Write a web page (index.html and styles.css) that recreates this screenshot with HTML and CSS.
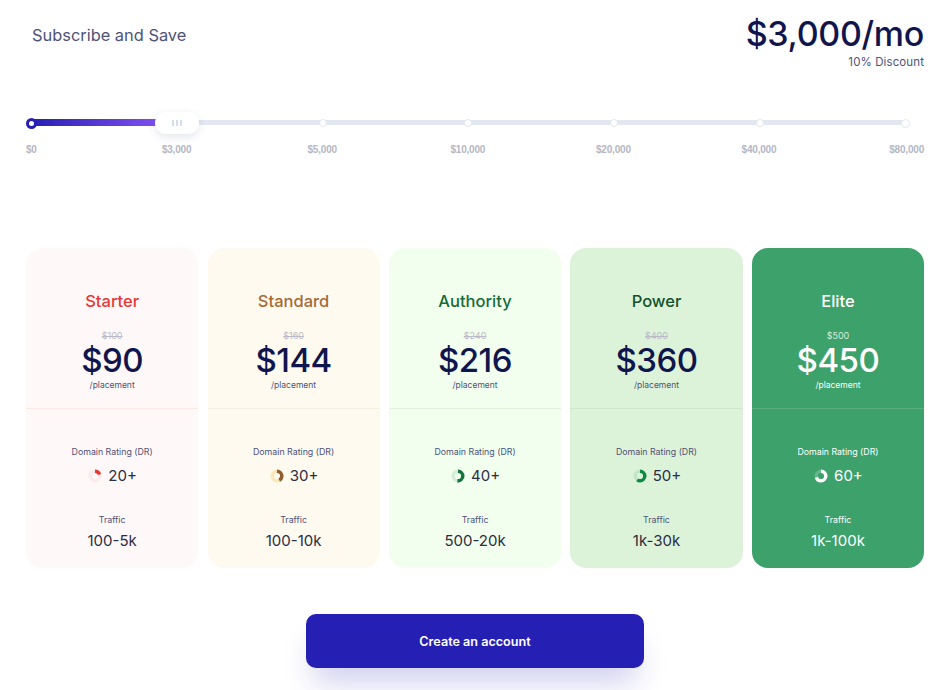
FILE: index.html
```html
<!DOCTYPE html>
<html lang="en">
<head>
    <meta charset="UTF-8">
    <meta name="viewport" content="width=device-width, initial-scale=1.0">
    <title>Subscribe and Save</title>
    <link rel="stylesheet" href="styles.css">
</head>
<body>
    <main class="pricing">
        <header class="summary">
            <h1 class="summary-title">Subscribe and Save</h1>
            <div class="summary-price">
                <p class="summary-amount">$3,000/mo</p>
                <p class="summary-discount">10% Discount</p>
            </div>
        </header>

        <section class="slider">
            <div class="track">
                <div class="track-fill"></div>
                <span class="stop"><span class="dot dot-start"></span></span>
                <span class="stop">
                    <span class="handle"><i></i><i></i><i></i></span>
                </span>
                <span class="stop"><span class="dot"></span></span>
                <span class="stop"><span class="dot"></span></span>
                <span class="stop"><span class="dot"></span></span>
                <span class="stop"><span class="dot"></span></span>
                <span class="stop"><span class="dot dot-end"></span></span>
            </div>
            <div class="track-labels">
                <span>$0</span>
                <span>$3,000</span>
                <span>$5,000</span>
                <span>$10,000</span>
                <span>$20,000</span>
                <span>$40,000</span>
                <span>$80,000</span>
            </div>
        </section>

        <section class="plans">
            <article class="plan plan-starter">
                <div class="plan-top">
                    <h2 class="plan-name">Starter</h2>
                    <p class="plan-old">$100</p>
                    <p class="plan-price">$90</p>
                    <p class="plan-unit">/placement</p>
                </div>
                <div class="plan-bottom">
                    <p class="stat-label">Domain Rating (DR)</p>
                    <p class="stat-value">
                        <svg class="ring" viewBox="0 0 16 16"><circle class="ring-bg" cx="8" cy="8" r="4.8"/><circle class="ring-arc" cx="8" cy="8" r="4.8" pathLength="100" stroke-dasharray="20 100"/></svg>
                        20+
                    </p>
                    <p class="stat-label stat-traffic">Traffic</p>
                    <p class="stat-value stat-range">100-5k</p>
                </div>
            </article>

            <article class="plan plan-standard">
                <div class="plan-top">
                    <h2 class="plan-name">Standard</h2>
                    <p class="plan-old">$160</p>
                    <p class="plan-price">$144</p>
                    <p class="plan-unit">/placement</p>
                </div>
                <div class="plan-bottom">
                    <p class="stat-label">Domain Rating (DR)</p>
                    <p class="stat-value">
                        <svg class="ring" viewBox="0 0 16 16"><circle class="ring-bg" cx="8" cy="8" r="4.8"/><circle class="ring-arc" cx="8" cy="8" r="4.8" pathLength="100" stroke-dasharray="42 100"/></svg>
                        30+
                    </p>
                    <p class="stat-label stat-traffic">Traffic</p>
                    <p class="stat-value stat-range">100-10k</p>
                </div>
            </article>

            <article class="plan plan-authority">
                <div class="plan-top">
                    <h2 class="plan-name">Authority</h2>
                    <p class="plan-old">$240</p>
                    <p class="plan-price">$216</p>
                    <p class="plan-unit">/placement</p>
                </div>
                <div class="plan-bottom">
                    <p class="stat-label">Domain Rating (DR)</p>
                    <p class="stat-value">
                        <svg class="ring" viewBox="0 0 16 16"><circle class="ring-bg" cx="8" cy="8" r="4.8"/><circle class="ring-arc" cx="8" cy="8" r="4.8" pathLength="100" stroke-dasharray="52 100"/></svg>
                        40+
                    </p>
                    <p class="stat-label stat-traffic">Traffic</p>
                    <p class="stat-value stat-range">500-20k</p>
                </div>
            </article>

            <article class="plan plan-power">
                <div class="plan-top">
                    <h2 class="plan-name">Power</h2>
                    <p class="plan-old">$400</p>
                    <p class="plan-price">$360</p>
                    <p class="plan-unit">/placement</p>
                </div>
                <div class="plan-bottom">
                    <p class="stat-label">Domain Rating (DR)</p>
                    <p class="stat-value">
                        <svg class="ring" viewBox="0 0 16 16"><circle class="ring-bg" cx="8" cy="8" r="4.8"/><circle class="ring-arc" cx="8" cy="8" r="4.8" pathLength="100" stroke-dasharray="60 100"/></svg>
                        50+
                    </p>
                    <p class="stat-label stat-traffic">Traffic</p>
                    <p class="stat-value stat-range">1k-30k</p>
                </div>
            </article>

            <article class="plan plan-elite">
                <div class="plan-top">
                    <h2 class="plan-name">Elite</h2>
                    <p class="plan-old">$500</p>
                    <p class="plan-price">$450</p>
                    <p class="plan-unit">/placement</p>
                </div>
                <div class="plan-bottom">
                    <p class="stat-label">Domain Rating (DR)</p>
                    <p class="stat-value">
                        <svg class="ring" viewBox="0 0 16 16"><circle class="ring-bg" cx="8" cy="8" r="4.8"/><circle class="ring-arc" cx="8" cy="8" r="4.8" pathLength="100" stroke-dasharray="70 100"/></svg>
                        60+
                    </p>
                    <p class="stat-label stat-traffic">Traffic</p>
                    <p class="stat-value stat-range">1k-100k</p>
                </div>
            </article>
        </section>

        <div class="actions">
            <button class="create-btn">Create an account</button>
        </div>
    </main>
</body>
</html>
```

FILE: styles.css
```css
:root {
    --ink: #10164d;
    --muted: #4e5278;
    --track: #e3e7f0;
    --brand: #261fb3;
}

* {
    margin: 0;
    padding: 0;
    box-sizing: border-box;
}

html, body {
    height: 100%;
    overflow: hidden;
}

body {
    font-family: Inter, 'Noto Sans', sans-serif;
    color: var(--ink);
    background-color: #fff;
}

.pricing {
    padding: 0 22px 0 26px;
}

/* top row */
.summary {
    display: flex;
    justify-content: space-between;
    align-items: flex-start;
    height: 112px;
    padding-top: 14px;
}

.summary-title {
    margin: 11px 0 0 6px;
    font-size: 16.4px;
    line-height: 20px;
    font-weight: 400;
    color: var(--muted);
}

.summary-price {
    text-align: right;
}

.summary-amount {
    font-size: 34px;
    line-height: 40px;
    font-weight: 500;
    letter-spacing: -0.3px;
}

.summary-discount {
    font-size: 11.5px;
    line-height: 16px;
    letter-spacing: 0.1px;
    color: var(--muted);
}

/* slider */
.slider {
    height: 136px;
}

.track {
    position: relative;
    display: flex;
    justify-content: space-between;
    align-items: center;
    width: 885px;
    height: 22px;
}

.track::before {
    content: "";
    position: absolute;
    left: 5px;
    right: 5px;
    top: 8px;
    height: 5px;
    background-color: var(--track);
}

.track-fill {
    position: absolute;
    left: 5px;
    top: 7px;
    width: 130px;
    height: 7px;
    background: linear-gradient(90deg, var(--brand), #8250f2);
}

.stop {
    position: relative;
    display: flex;
    justify-content: center;
    align-items: center;
    width: 11px;
    height: 22px;
}

.dot {
    flex: none;
    width: 8px;
    height: 8px;
    border-radius: 50%;
    background-color: #fff;
    border: 1.5px solid var(--track);
}

.dot-start {
    width: 11px;
    height: 11px;
    border: 3px solid var(--brand);
}

.dot-end {
    width: 9px;
    height: 9px;
}

.handle {
    flex: none;
    display: flex;
    justify-content: center;
    align-items: center;
    gap: 2px;
    width: 44px;
    height: 22px;
    border-radius: 11px;
    background-color: #fff;
    box-shadow: 0 3px 10px rgba(40, 50, 110, 0.12);
}

.handle i {
    width: 2px;
    height: 6px;
    background-color: #d3dcef;
}

.track-labels {
    display: grid;
    grid-template-columns: 77.8px repeat(5, 145.6px) 1fr;
    margin-top: 10px;
    font-family: 'Liberation Sans', Arial, sans-serif;
    font-size: 10px;
    line-height: 12px;
    font-weight: 700;
    letter-spacing: -0.2px;
    color: #b4b7c4;
    text-align: center;
}

.track-labels span:first-child {
    text-align: left;
}

.track-labels span:last-child {
    text-align: right;
}

/* plan cards */
.plans {
    display: grid;
    grid-template-columns: repeat(5, 1fr);
    gap: 9.4px;
    margin-left: 0.1px;
}

.plan {
    --bg: #fff;
    --name: var(--ink);
    --line: #eee;
    --price: var(--ink);
    --label: var(--muted);
    --value: #2b2d42;
    --old: #b9bac6;
    --arc: #333;
    --arc-bg: #eee;
    height: 320px;
    border-radius: 16px;
    text-align: center;
    background-color: var(--bg);
}

.plan-starter {
    --bg: #fff8f8;
    --name: #e53935;
    --line: #fde8e6;
    --arc: #e53935;
    --arc-bg: #fdeaea;
}

.plan-standard {
    --bg: #fffaf0;
    --name: #a56a36;
    --line: #f5efe2;
    --arc: #8f5f2e;
    --arc-bg: #fde6b8;
}

.plan-authority {
    --bg: #f3ffee;
    --name: #146c3a;
    --line: #e4f2de;
    --arc: #15733f;
    --arc-bg: #d6edd8;
}

.plan-power {
    --bg: #dcf3da;
    --name: #12512a;
    --line: #cde6cd;
    --arc: #0f8a43;
    --arc-bg: #c3e3c6;
}

.plan-elite {
    --bg: #3ca16a;
    --name: #fff;
    --line: #5aaf80;
    --price: #fff;
    --label: #fff;
    --value: #fff;
    --old: #d7ecdf;
    --arc: #fff;
    --arc-bg: #66b78b;
}

.plan-top {
    height: 161px;
    padding-top: 43px;
    border-bottom: 1px solid var(--line);
}

.plan-name {
    font-size: 16.5px;
    line-height: 20px;
    font-weight: 500;
    color: var(--name);
}

.plan-old {
    margin-top: 19px;
    font-size: 9px;
    line-height: 12px;
    color: var(--old);
    text-decoration: line-through;
}

.plan-elite .plan-old {
    text-decoration: none;
}

.plan-price {
    font-size: 33px;
    line-height: 36px;
    font-weight: 500;
    letter-spacing: -0.5px;
    color: var(--price);
}

.plan-unit {
    margin-top: 1px;
    font-size: 8.5px;
    line-height: 12px;
    color: var(--label);
}

.plan-bottom {
    padding-top: 36px;
}

.stat-label {
    font-size: 8.8px;
    line-height: 14px;
    color: var(--label);
}

.stat-value {
    display: flex;
    justify-content: center;
    align-items: center;
    gap: 5px;
    margin-top: 7px;
    font-size: 15px;
    line-height: 20px;
    color: var(--value);
}

.stat-traffic {
    margin-top: 27px;
}

.stat-range {
    margin-top: 4px;
}

.ring {
    width: 16px;
    height: 16px;
    transform: rotate(-90deg);
}

.ring circle {
    fill: none;
    stroke-width: 3.4;
}

.ring-bg {
    stroke: var(--arc-bg);
}

.ring-arc {
    stroke: var(--arc);
}

/* button */
.actions {
    display: flex;
    justify-content: center;
    margin-top: 46px;
}

.create-btn {
    width: 338px;
    height: 54px;
    border: none;
    border-radius: 10px;
    font-family: inherit;
    font-size: 12.6px;
    font-weight: 600;
    color: #fff;
    background-color: var(--brand);
    box-shadow: 0 22px 30px -8px rgba(38, 31, 179, 0.22);
    cursor: pointer;
}
```
